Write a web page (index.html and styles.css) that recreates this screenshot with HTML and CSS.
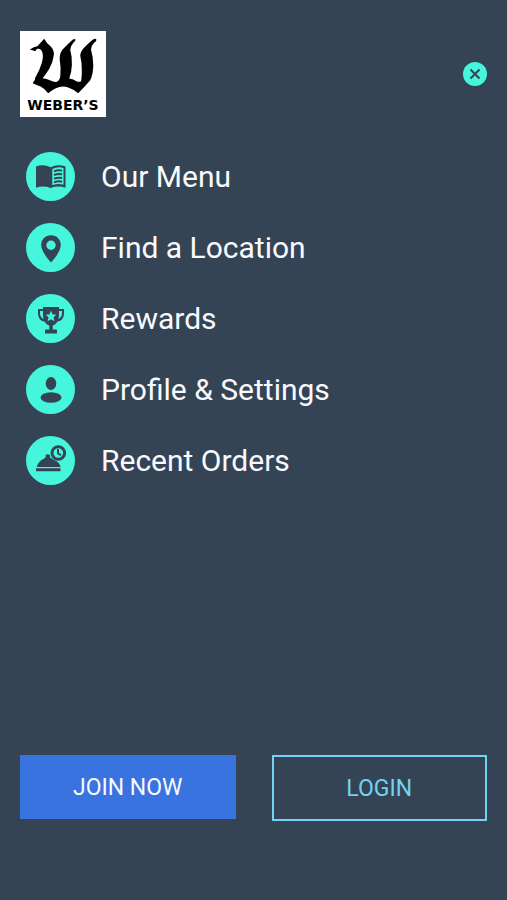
FILE: index.html
```html
<!DOCTYPE html>
<html lang="en">
<head>
<meta charset="utf-8">
<meta name="viewport" content="width=device-width, initial-scale=1">
<title>Weber's</title>
<link rel="stylesheet" href="styles.css">
</head>
<body>
<header class="top">
  <a class="logo" href="#" aria-label="Weber's home">
    <svg class="logo-mark" viewBox="12 10 208 170" aria-hidden="true">
      <path d="M15 46Q28 36 38 35Q50 22 59 12Q66 26 78 35Q90 46 88 62Q86 82 74 104Q64 120 54 132Q66 133 78 139Q88 145 98 143Q108 136 108 122Q110 100 107 84Q103 62 114 46Q130 28 145 15L153 12Q156 18 148 24Q139 34 138 46Q144 68 143 92Q142 116 135 133Q148 134 158 142Q166 144 171 141Q174 120 173 104Q173 84 169 68Q166 52 182 37Q196 24 208 14L216 12Q220 18 211 24Q201 34 201 46Q208 68 208 94Q207 122 198 139Q180 160 162 178Q150 166 132 160Q112 154 96 162Q82 168 71 178Q62 164 48 157Q36 152 24 147Q32 138 32 130Q46 106 52 84Q58 62 52 50Q48 42 38 43Q34 45 32 50Q24 47 15 46Z"/>
    </svg>
    <span class="logo-name">WEBER’S</span>
  </a>
  <button class="close" type="button" aria-label="Close menu">
    <svg viewBox="0 0 24 24" aria-hidden="true"><path d="M7.5 7.5l9 9M16.5 7.5l-9 9"/></svg>
  </button>
</header>

<nav class="menu" aria-label="Main">
  <a class="item" href="#">
    <svg class="icon" viewBox="0 0 49 49" aria-hidden="true">
      <path class="ink" d="M10 14.5Q17.500 11.500 24.500 15.200Q32 11.500 39.500 14.500V35.800Q32 33.300 24.500 36Q17.500 33.300 10 35.800Z"/>
      <path class="cut" d="M26.300 17Q32 14.200 37.500 16V32.700Q32 31.200 26.300 33.300Z"/>
      <path class="line" d="M28 19.300q4-1.700 8-.700M28 23q4-1.700 8-.700M28 26.700q4-1.700 8-.700M28 30.400q4-1.700 8-.700"/>
    </svg>
    <span>Our Menu</span>
  </a>
  <a class="item" href="#">
    <svg class="icon" viewBox="0 0 49 49" aria-hidden="true">
      <path class="ink" fill-rule="evenodd" d="M25 12.300C19.500 12.300 15.200 16.500 15.200 22C15.200 29.300 25 39.500 25 39.500S34.800 29.300 34.800 22C34.800 16.500 30.500 12.300 25 12.300ZM25 17.500A4.700 4.700 0 1 1 25 26.900A4.700 4.700 0 1 1 25 17.500Z"/>
    </svg>
    <span>Find a Location</span>
  </a>
  <a class="item" href="#">
    <svg class="icon" viewBox="0 0 49 49" aria-hidden="true">
      <path class="ink" d="M17 13H33V15H38V19C38 24 35.500 27 31.500 27.500C30 30 28.500 31 26.700 31.500V35.500H30Q31 35.500 31 36.500V39.500H19V36.500Q19 35.500 20 35.500H23.300V31.500C21.500 31 20 30 18.500 27.500C14.500 27 12 24 12 19V15H17Z"/>
      <path class="cut" d="M14 17H17V20Q17 23 17.700 25Q14 23.500 14 19ZM36 17H33V20Q33 23 32.300 25Q36 23.500 36 19Z"/>
      <path class="cut" d="M25 16.800L26.600 20.500L30.400 20.800L27.500 23.300L28.400 27.200L25 25.200L21.600 27.200L22.500 23.300L19.600 20.800L23.400 20.500Z"/>
    </svg>
    <span>Rewards</span>
  </a>
  <a class="item" href="#">
    <svg class="icon" viewBox="0 0 49 49" aria-hidden="true">
      <ellipse class="ink" cx="25" cy="18.500" rx="5.300" ry="6.500"/>
      <ellipse class="ink" cx="25" cy="32.500" rx="10.500" ry="5.200"/>
    </svg>
    <span>Profile &amp; Settings</span>
  </a>
  <a class="item" href="#">
    <svg class="icon" viewBox="0 0 49 49" aria-hidden="true">
      <path class="ink" d="M11 31C12 25.500 16 24 19.800 21.300C18.800 19.500 20 18.300 21.800 18.300S24.800 19.500 23.800 21.300C28 24 33.500 25.500 34.500 31ZM10 32.300H34.500V35.300H10Z"/>
      <circle class="cut" cx="32.300" cy="17" r="8.300"/>
      <circle class="clock" cx="32.300" cy="17" r="6.300"/>
      <path class="line" d="M32 13V17.500L35 19.200"/>
    </svg>
    <span>Recent Orders</span>
  </a>
</nav>

<footer class="actions">
  <button class="btn join" type="button">JOIN NOW</button>
  <button class="btn login" type="button">LOGIN</button>
</footer>
</body>
</html>
```
FILE: styles.css
```css
:root {
  --bg: #354454;
  --mint: #45f5dc;
  --sky: #72d3f2;
}

* {
  box-sizing: border-box;
}

body {
  margin: 0;
  min-height: 100vh;
  padding: 31px 20px 79px;
  display: flex;
  flex-direction: column;
  background: var(--bg);
  color: #f8faff;
  font-family: Roboto, "Liberation Sans", sans-serif;
}

.top {
  display: flex;
  justify-content: space-between;
  align-items: center;
}

.logo {
  width: 86px;
  height: 86px;
  padding-top: 7px;
  display: flex;
  flex-direction: column;
  align-items: center;
  background: #fff;
  color: #000;
  text-decoration: none;
}

.logo-mark {
  width: 70px;
  height: 56px;
}

.logo-name {
  margin-top: 3px;
  font: bold 14px/16px "DejaVu Sans", sans-serif;
}

.close {
  width: 24px;
  height: 24px;
  padding: 0;
  border: 0;
  border-radius: 50%;
  background: var(--mint);
  cursor: pointer;
}

.close svg {
  display: block;
  fill: none;
  stroke: var(--bg);
  stroke-width: 2;
}

.menu {
  margin-top: 35px;
  padding-left: 6px;
  display: flex;
  flex-direction: column;
  gap: 22px;
}

.item {
  display: flex;
  align-items: center;
  gap: 26px;
  color: inherit;
  font-size: 30px;
  line-height: 49px;
  text-decoration: none;
}

.icon {
  flex: none;
  width: 49px;
  height: 49px;
  border-radius: 50%;
  background: var(--mint);
}

.ink {
  fill: var(--bg);
}

.cut {
  fill: var(--mint);
}

.line,
.clock {
  fill: none;
  stroke: var(--bg);
  stroke-width: 2;
}

.clock {
  stroke-width: 3;
}

.actions {
  margin-top: auto;
  display: grid;
  grid-template-columns: 1fr 1fr;
  align-items: start;
  gap: 36px;
}

.btn {
  height: 64px;
  padding: 0;
  border: 0;
  font-family: inherit;
  font-size: 23px;
  cursor: pointer;
}

.join {
  background: #3873e0;
  color: #f8faff;
}

.login {
  height: 66px;
  border: 2px solid var(--sky);
  background: transparent;
  color: var(--sky);
}
```
